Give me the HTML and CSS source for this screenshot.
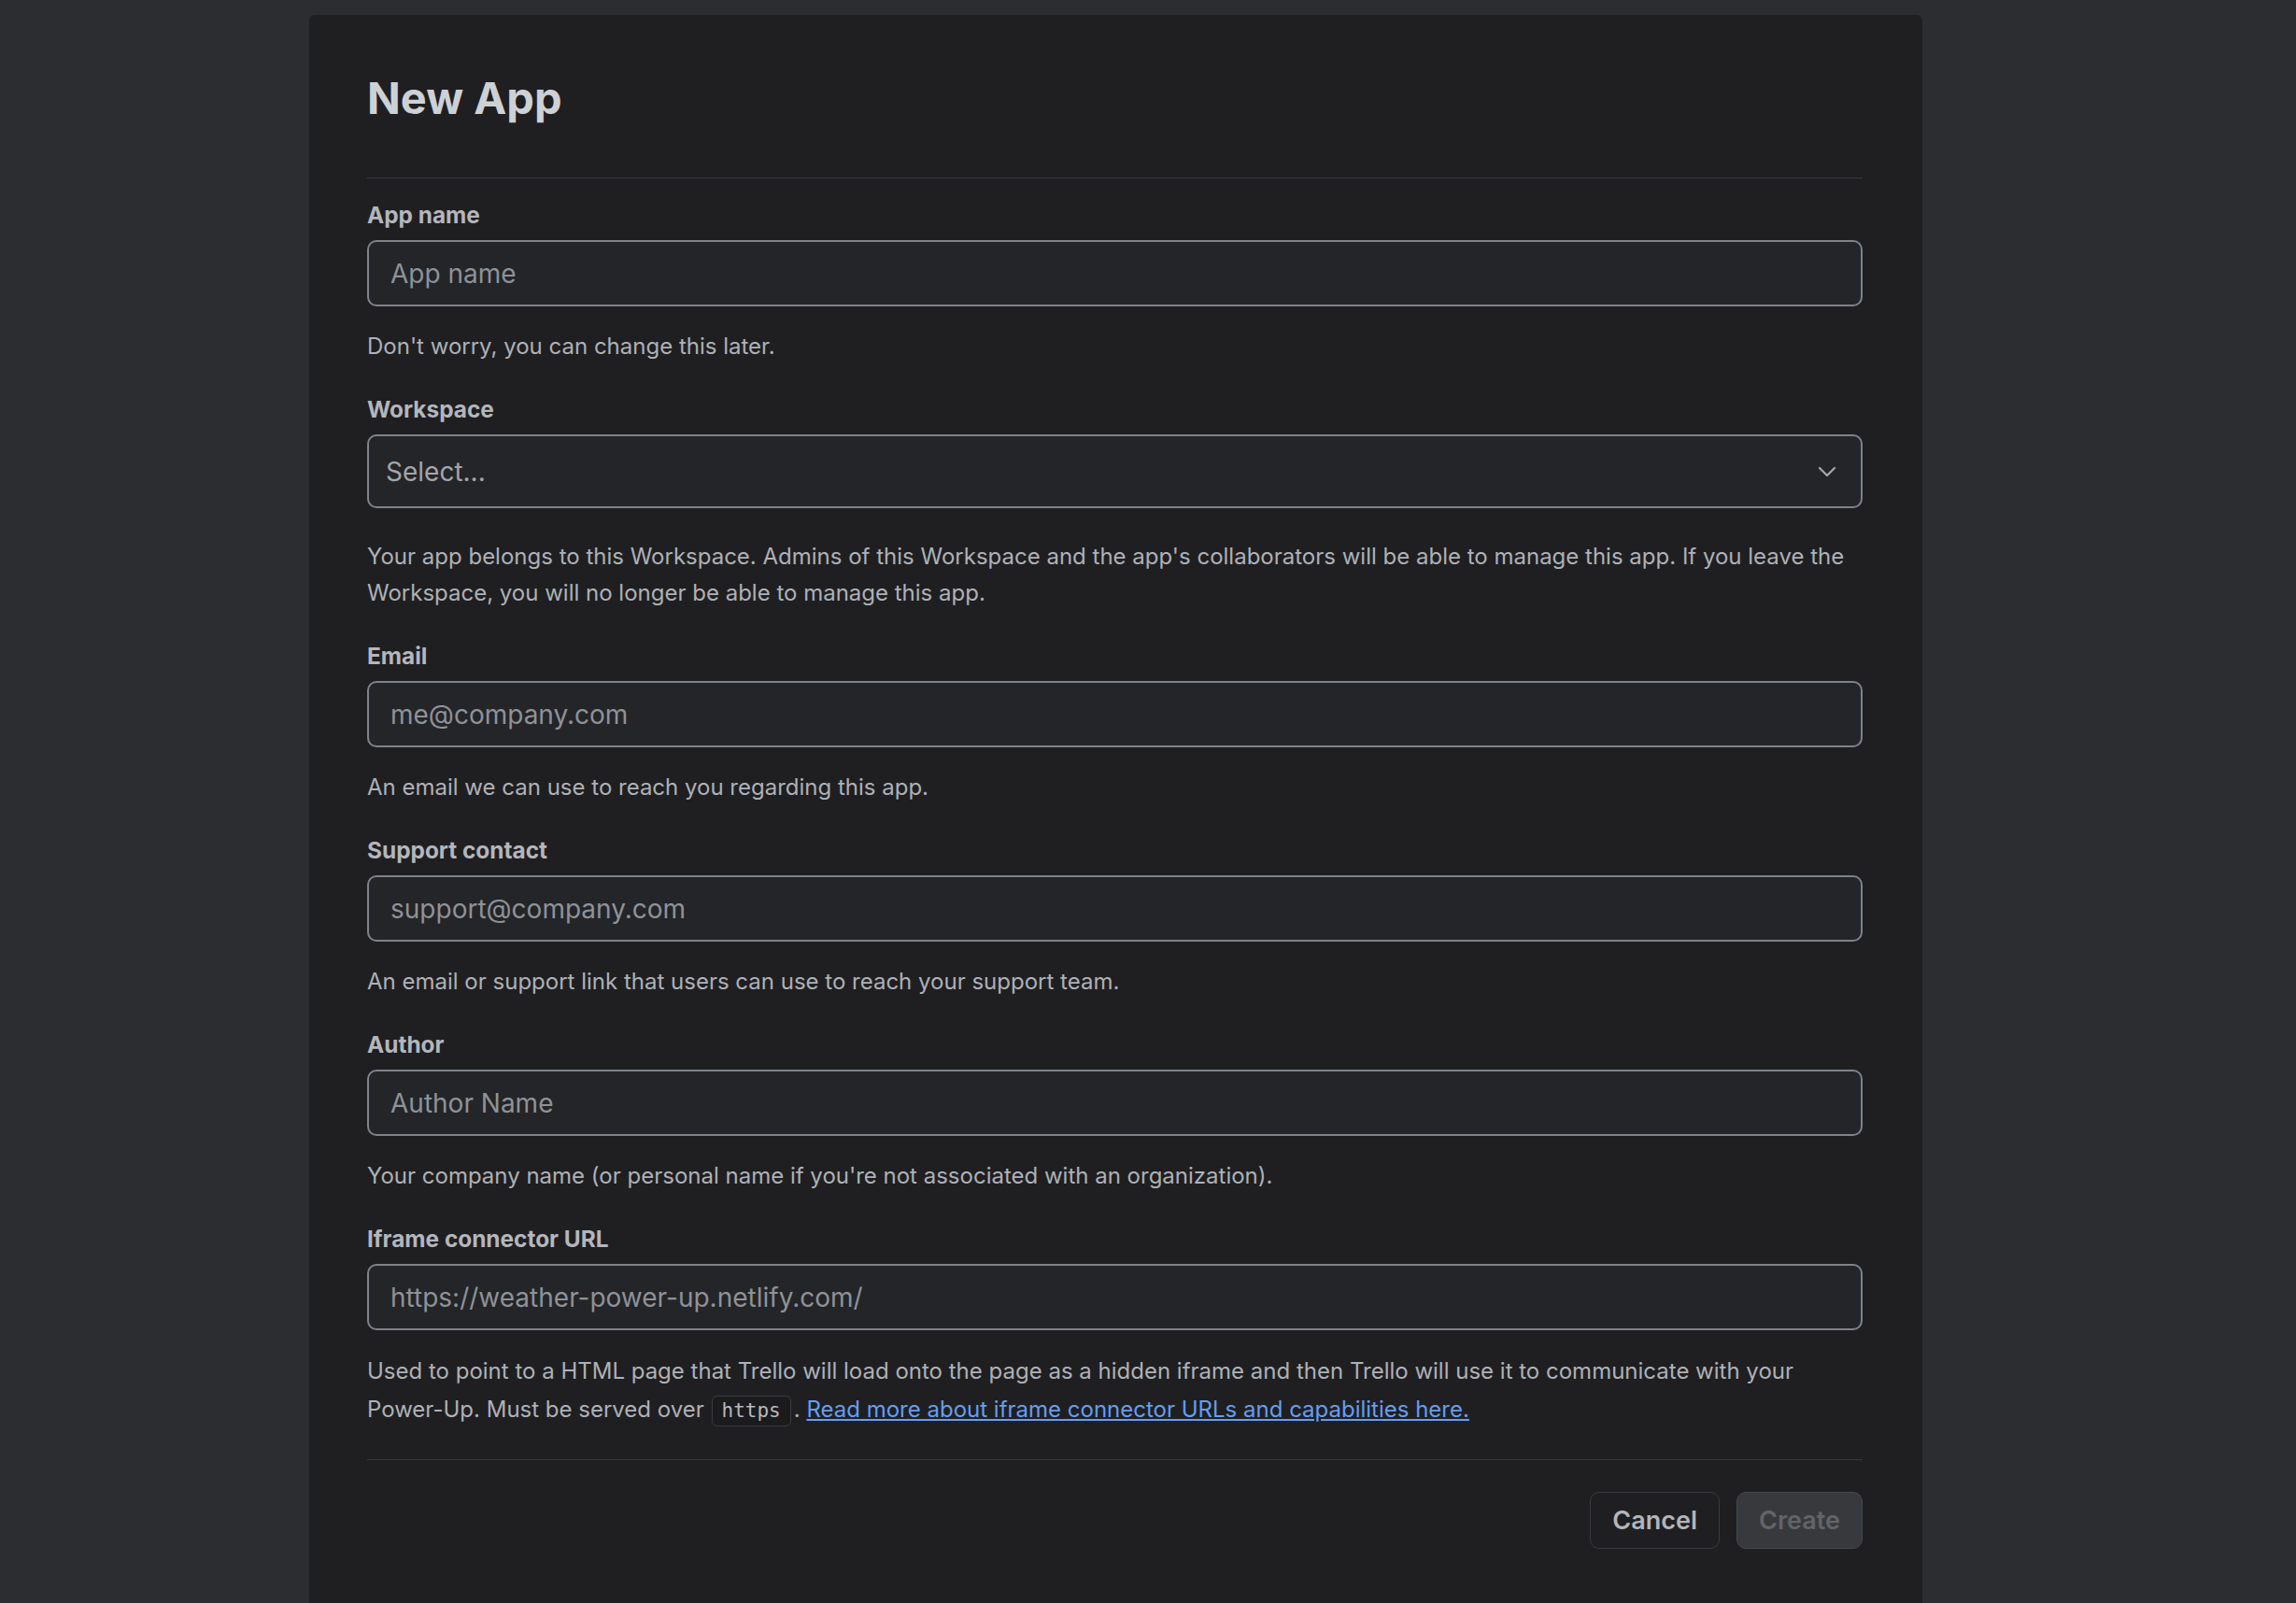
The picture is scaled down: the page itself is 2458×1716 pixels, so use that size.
FILE: index.html
```html
<!DOCTYPE html>
<html lang="en">
<head>
  <meta charset="UTF-8" />
  <meta name="viewport" content="width=device-width, initial-scale=1" />
  <title>New App - Power-Up Admin</title>
  <link rel="stylesheet" href="styles.css">
</head>
<body>

<div class="modal">
  <div class="modal-header">
    <h1>New App</h1>
  </div>

  <form class="app-form">
    <div class="field">
      <label class="label" for="appname">App name</label>
      <input class="input" type="text" id="appname" placeholder="App name">
      <p class="help">Don't worry, you can change this later.</p>
    </div>

    <div class="field">
      <label class="label">Workspace</label>
      <div class="select">
        <span>Select...</span>
        <svg width="20" height="12" viewBox="0 0 20 12" fill="none">
          <path d="M2 2 L10 10 L18 2" stroke="#a6a9af" stroke-width="2.2" stroke-linecap="round" stroke-linejoin="round"/>
        </svg>
      </div>
      <p class="help">Your app belongs to this Workspace. Admins of this Workspace and the app's collaborators will be able to manage this app. If you leave the Workspace, you will no longer be able to manage this app.</p>
    </div>

    <div class="field">
      <label class="label" for="email">Email</label>
      <input class="input" type="text" id="email" placeholder="me@company.com">
      <p class="help">An email we can use to reach you regarding this app.</p>
    </div>

    <div class="field">
      <label class="label" for="support">Support contact</label>
      <input class="input" type="text" id="support" placeholder="support@company.com">
      <p class="help">An email or support link that users can use to reach your support team.</p>
    </div>

    <div class="field">
      <label class="label" for="author">Author</label>
      <input class="input" type="text" id="author" placeholder="Author Name">
      <p class="help">Your company name (or personal name if you're not associated with an organization).</p>
    </div>

    <div class="field last">
      <label class="label" for="iframe">Iframe connector URL</label>
      <input class="input" type="text" id="iframe" placeholder="https://weather-power-up.netlify.com/">
      <p class="help">Used to point to a HTML page that Trello will load onto the page as a hidden iframe and then Trello will use it to communicate with your Power-Up. Must be served over <code>https</code>. <a href="#">Read more about iframe connector URLs and capabilities here.</a></p>
    </div>

    <div class="modal-footer">
      <button type="button" class="btn btn-cancel">Cancel</button>
      <button type="submit" class="btn btn-create" disabled>Create</button>
    </div>
  </form>
</div>

</body>
</html>
```

FILE: styles.css
```css
body {
  margin: 0;
  height: 1716px;
  overflow: hidden;
  box-sizing: border-box;
  padding: 16px 0 0 331px;
  background: #2c2d31;
  font-family: Inter, 'Noto Sans', sans-serif;
}

.modal {
  width: 1727px;
  box-sizing: border-box;
  padding: 61px 64px 64px 62px;
  background: #1f1f21;
  border-radius: 6px 6px 0 0;
}

.modal-header {
  padding-bottom: 57px;
  border-bottom: 1px solid #37383c;
}

h1 {
  margin: 0;
  font-size: 47px;
  line-height: 56px;
  font-weight: 700;
  color: #cdd1d6;
}

.app-form {
  padding-top: 23px;
}

.field {
  margin-bottom: 32px;
}

.field.last {
  margin-bottom: 0;
}

.label {
  display: block;
  margin-bottom: 11px;
  font-size: 24.4px;
  line-height: 32px;
  font-weight: 700;
  color: #b4b6bc;
}

.input {
  display: block;
  width: 100%;
  height: 71px;
  box-sizing: border-box;
  padding: 0 23px;
  border: 2px solid #7f828a;
  border-radius: 10px;
  background: #242528;
  font-family: Inter, 'Noto Sans', sans-serif;
  font-size: 28px;
  color: #c7c9ce;
  outline: none;
}

.input::placeholder {
  color: #8f9298;
}

.select {
  display: flex;
  align-items: center;
  justify-content: space-between;
  height: 79px;
  box-sizing: border-box;
  padding: 0 26px 0 18px;
  border: 2px solid #7f828a;
  border-radius: 10px;
  background: #242528;
  font-size: 28px;
  color: #a3a6ab;
}

.help {
  margin: 23px 0 0;
  font-size: 24px;
  line-height: 39px;
  color: #aeb1b7;
}

.select + .help {
  margin-top: 32px;
}

.field.last .help {
  line-height: 41px;
}

code {
  display: inline-block;
  margin: 0 3px 0 1px;
  padding: 3px 10px;
  line-height: 25px;
  border: 1px solid #3a3b40;
  border-radius: 6px;
  background: #1b1b1d;
  font-family: 'DejaVu Sans Mono', monospace;
  font-size: 21px;
  color: #b6b8bd;
}

.help a {
  color: #669df1;
  text-decoration: underline;
}

.modal-footer {
  display: flex;
  justify-content: flex-end;
  gap: 18px;
  margin-top: 33px;
  padding-top: 34px;
  border-top: 1px solid #37383c;
}

.btn {
  height: 61px;
  padding: 0 23px;
  border-radius: 10px;
  font-family: Inter, 'Noto Sans', sans-serif;
  font-size: 27px;
  font-weight: 600;
}

.btn-cancel {
  background: transparent;
  border: 1px solid #3a3b40;
  color: #b3b5bb;
  cursor: pointer;
}

.btn-create {
  background: #38393d;
  border: 1px solid #46474b;
  color: #626469;
}
```
